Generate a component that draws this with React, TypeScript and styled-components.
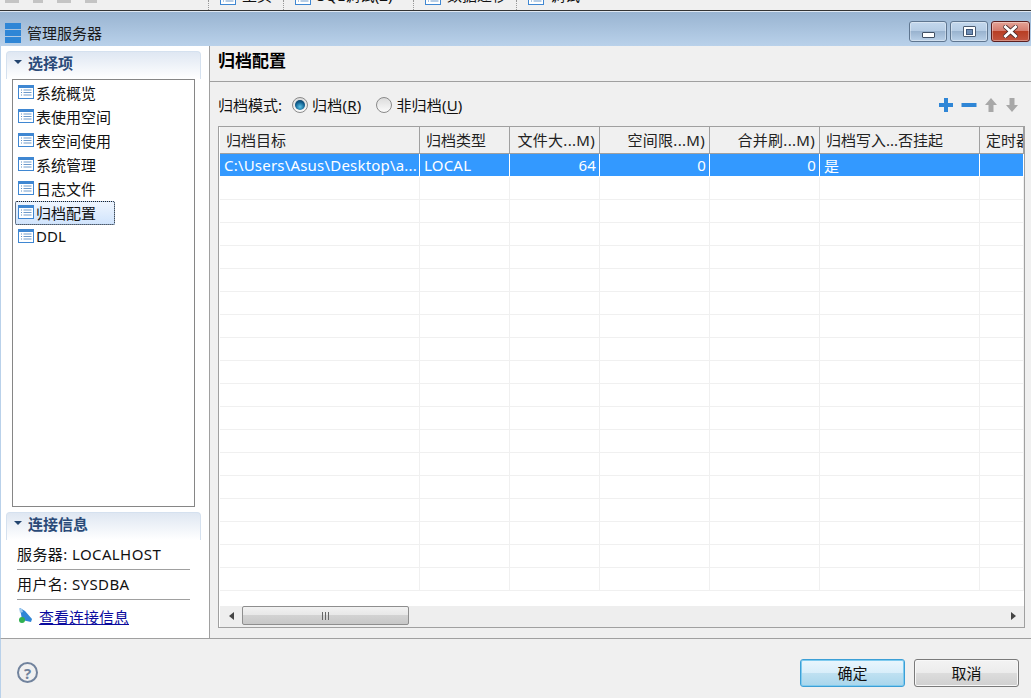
import React from 'react';
import styled, { createGlobalStyle } from 'styled-components';

const GlobalStyle = createGlobalStyle`
  html, body {
    margin: 0;
    padding: 0;
    background: #f0f0f0;
  }
  body {
    font-family: "Noto Sans", "Noto Sans CJK SC", sans-serif;
    font-size: 15px;
    color: #111;
  }
  * { box-sizing: border-box; }
`;

const Page = styled.div`
  width: 1031px;
  height: 698px;
  display: flex;
  flex-direction: column;
  overflow: hidden;
  background: #f0f0f0;
`;

const AppToolbar = styled.div`
  height: 12px;
  flex: none;
  display: flex;
  align-items: flex-start;
  overflow: hidden;
  background: #f0f0f0;
  border-bottom: 1px solid #dfe8f2;
  box-shadow: inset 0 -1px 0 #333;
`;

const ToolbarGroup = styled.div<{ $width: number }>`
  width: ${p => p.$width}px;
  flex: none;
  height: 10px;
  display: flex;
  align-items: flex-end;
  gap: 6px;
  padding: 0 0 5px 11px;
  border-left: 1px dotted #999;
  white-space: nowrap;
  font-size: 15px;
  line-height: 20px;
`;

const ToolbarStart = styled.div`
  width: 208px;
  flex: none;
  height: 10px;
  display: flex;
  align-items: flex-start;
  gap: 14px;
  padding-left: 5px;
`;

const ToolbarStub = styled.span<{ $width: number }>`
  width: ${p => p.$width}px;
  height: 3px;
  background: #c4c4c4;
`;

const TitleBar = styled.div`
  height: 34px;
  flex: none;
  display: flex;
  align-items: center;
  padding: 0 1px 0 5px;
  background: linear-gradient(#99b4d1, #b9d1ea);
`;

const TitleText = styled.div`
  margin-left: 6px;
  flex: 1;
  font-size: 15px;
  margin-top: 6px;
  color: #1a1a1a;
`;

const TitleIcon = styled.svg`
  margin-top: 8px;
  flex: none;
`;

const WindowButtons = styled.div`
  display: flex;
  gap: 3px;
  align-self: flex-start;
  margin-top: 9px;
`;

const WindowButton = styled.div<{ $close?: boolean }>`
  width: ${p => (p.$close ? 39 : 38)}px;
  height: 21px;
  border: 1px solid ${p => (p.$close ? '#5c1f1f' : '#5f7690')};
  border-radius: 3px;
  display: flex;
  align-items: center;
  justify-content: center;
  background: ${p =>
    p.$close
      ? 'linear-gradient(#e4a396 0%, #d47a6c 48%, #b83e24 50%, #c25440 100%)'
      : 'linear-gradient(#c4d8ed 0%, #b5cce4 48%, #99b3cf 50%, #b9d0e8 100%)'};
  box-shadow: inset 0 0 0 1px rgba(255, 255, 255, 0.35);
`;

const MinGlyph = styled.div`
  width: 13px;
  height: 6px;
  margin-top: 6px;
  background: #fff;
  border: 1px solid #3f4f63;
  border-radius: 1px;
`;

const MaxGlyph = styled.div`
  width: 13px;
  height: 11px;
  background: #fff;
  border: 1px solid #4a5a70;
  border-radius: 1px;
  display: flex;
  align-items: center;
  justify-content: center;
  &::after {
    content: '';
    width: 5px;
    height: 4px;
    background: #6f8db4;
    border: 1px solid #40587a;
  }
`;

const Main = styled.div`
  flex: 1;
  display: flex;
  min-height: 0;
  border-left: 1px solid #b9d1ea;
  border-bottom: 1px solid #a0a0a0;
`;

const Sidebar = styled.div`
  width: 209px;
  flex: none;
  background: #fff;
  border-right: 1px solid #a0a0a0;
  border-left: 1px solid #fff;
  padding: 5px 8px 0 4px;
  display: flex;
  flex-direction: column;
`;

const SectionHeader = styled.div`
  height: 28px;
  flex: none;
  display: flex;
  align-items: center;
  gap: 6px;
  padding: 0 0 7px 7px;
  border: 1px solid #d5e1ef;
  border-bottom: none;
  border-radius: 4px 4px 0 0;
  background: linear-gradient(#dfe7f2, #ffffff);
  color: #2a4a78;
  font-weight: 700;
  font-size: 15px;
`;

const Caret = styled.span`
  width: 0;
  height: 0;
  border-left: 4px solid transparent;
  border-right: 4px solid transparent;
  border-top: 4px solid #23456f;
`;

const ListBox = styled.div`
  flex: 1;
  margin: 0 6px;
  border: 1px solid #868686;
  padding: 1px 2px;
  display: flex;
  flex-direction: column;
  min-height: 0;
`;

const ListItem = styled.div<{ $selected?: boolean }>`
  height: 24px;
  flex: none;
  width: ${p => (p.$selected ? '100px' : 'auto')};
  display: flex;
  align-items: center;
  gap: 2px;
  padding: 0 0 2px 3px;
  font-size: 15px;
  color: #111;
  ${p =>
    p.$selected &&
    `
    outline: 1px dotted #222;
    outline-offset: -1px;
    border-radius: 2px;
    background: linear-gradient(#f0f6fe, #cfe3fc);
    box-shadow: 0 0 0 1px #a9c8ee inset;
  `}
`;

const ConnectionPanel = styled.div`
  flex: none;
  margin-top: 5px;
`;

const InfoRow = styled.div`
  height: 30px;
  margin: 0 11px;
  display: flex;
  align-items: center;
  border-bottom: 1px solid #a0a0a0;
  font-size: 15px;
  letter-spacing: 0.4px;
  padding-bottom: 3px;
`;

const LinkRow = styled.div`
  height: 38px;
  display: flex;
  align-items: center;
  gap: 5px;
  padding: 0 0 6px 12px;
`;

const InfoLink = styled.a`
  color: #0b0b9e;
  text-decoration: underline;
  font-size: 15px;
`;

const Content = styled.div`
  flex: 1;
  min-width: 0;
  display: flex;
  flex-direction: column;
  background: #f0f0f0;
`;

const ContentHeader = styled.div`
  height: 36px;
  flex: none;
  display: flex;
  align-items: center;
  padding: 0 0 8px 8px;
  border-bottom: 1px solid #a0a0a0;
  font-size: 17px;
  font-weight: 700;
  color: #000;
`;

const ModeBar = styled.div`
  height: 44px;
  flex: none;
  display: flex;
  align-items: center;
  padding: 1px 12px 0 8px;
  font-size: 15px;
`;

const ModeLabel = styled.span`
  margin-right: 10px;
`;

const RadioLabel = styled.label`
  display: flex;
  align-items: center;
  gap: 4px;
  margin-right: 15px;
  letter-spacing: 0.2px;
  u { text-underline-offset: 2px; }
`;

const RadioCircle = styled.span<{ $checked?: boolean }>`
  width: 16px;
  height: 16px;
  border-radius: 50%;
  border: 1px solid #8a8a8a;
  display: flex;
  align-items: center;
  justify-content: center;
  background: linear-gradient(#dcdcdc, #fbfbfb);
  &::after {
    content: '';
    display: ${p => (p.$checked ? 'block' : 'none')};
    width: 10px;
    height: 10px;
    border-radius: 50%;
    background: radial-gradient(circle at 50% 68%, #5cc4e8, #0f5e8e 55%, #10344f);
  }
`;

const ActionGroup = styled.div`
  margin-left: auto;
  display: flex;
  gap: 7px;
  align-items: center;
`;

const TableFrame = styled.div`
  margin: 0 6px 10px 8px;
  height: 502px;
  flex: none;
  border: 1px solid #a0a0a0;
  background: #fff;
  display: flex;
  flex-direction: column;
  overflow: hidden;
  padding-left: 1px;
`;

const gridColumns = '200px 90px 90px 110px 110px 160px 44px';

const HeaderRow = styled.div`
  height: 27px;
  flex: none;
  display: grid;
  grid-template-columns: ${gridColumns};
`;

const HeaderCell = styled.div<{ $right?: boolean }>`
  display: flex;
  align-items: center;
  justify-content: ${p => (p.$right ? 'flex-end' : 'flex-start')};
  padding: 0 4px 1px 6px;
  background: #f0f0f0;
  border-right: 1px solid #a0a0a0;
  border-bottom: 1px solid #a0a0a0;
  white-space: nowrap;
  overflow: hidden;
  font-size: 15px;
  letter-spacing: ${p => (p.$right ? '0.3px' : '0')};
  color: #222;
`;

const RowsArea = styled.div`
  flex: 1;
  min-height: 0;
  overflow: hidden;
`;

const DataRow = styled.div<{ $selected?: boolean }>`
  height: 23px;
  display: grid;
  grid-template-columns: ${gridColumns};
  background: ${p => (p.$selected ? '#3399ff' : '#fff')};
  color: ${p => (p.$selected ? '#fff' : '#111')};
  border-bottom: 1px solid ${p => (p.$selected ? '#fff' : '#f0f0f0')};
`;

const DataCell = styled.div<{ $right?: boolean; $selected?: boolean }>`
  display: flex;
  align-items: center;
  justify-content: ${p => (p.$right ? 'flex-end' : 'flex-start')};
  padding: 0 3px 0 4px;
  border-right: 1px solid ${p => (p.$selected ? '#fff' : '#f0f0f0')};
  white-space: nowrap;
  overflow: hidden;
  font-size: 15px;
  letter-spacing: 0.2px;
`;

const ScrollBar = styled.div`
  height: 21px;
  flex: none;
  display: flex;
  align-items: center;
  background: #eeeeee;
  padding-bottom: 2px;
`;

const ScrollArrow = styled.div<{ $right?: boolean }>`
  width: 22px;
  flex: none;
  display: flex;
  justify-content: center;
  &::after {
    content: '';
    border-top: 4px solid transparent;
    border-bottom: 4px solid transparent;
    ${p => (p.$right ? 'border-left: 5px solid #444;' : 'border-right: 5px solid #444;')}
  }
`;

const ScrollThumb = styled.div`
  width: 167px;
  height: 19px;
  flex: none;
  display: flex;
  align-items: center;
  justify-content: center;
  gap: 2px;
  border: 1px solid #8e8e8e;
  border-radius: 2px;
  background: linear-gradient(#f2f2f2 0%, #e8e8e8 45%, #d2d2d2 50%, #c8c8c8 100%);
`;

const ThumbGrip = styled.span`
  width: 1px;
  height: 8px;
  background: #666;
`;

const ScrollSpace = styled.div`
  flex: 1;
`;

const Footer = styled.div`
  flex: none;
  height: 59px;
  display: flex;
  align-items: center;
  padding: 9px 12px 0 16px;
  gap: 9px;
  background: #f0f0f0;
  border-left: 1px solid #b9d1ea;
`;

const HelpIcon = styled.div`
  width: 21px;
  height: 21px;
  margin-top: -1px;
  border-radius: 50%;
  border: 2px solid #71839d;
  color: #71839d;
  font-weight: 700;
  font-size: 15px;
  display: flex;
  align-items: center;
  justify-content: center;
  margin-right: auto;
`;

const DialogButton = styled.button<{ $primary?: boolean }>`
  width: 105px;
  height: 28px;
  font: inherit;
  font-size: 15px;
  color: #111;
  padding: 0 0 2px;
  border-radius: 3px;
  border: 1px solid ${p => (p.$primary ? '#3c9fd6' : '#7a7a7a')};
  background: ${p =>
    p.$primary
      ? 'linear-gradient(#eaf6fd 0%, #d9eefa 48%, #bee0f1 52%, #a9d6ec 100%)'
      : 'linear-gradient(#f3f3f3 0%, #ececec 48%, #dcdcdc 52%, #d0d0d0 100%)'};
  box-shadow: ${p =>
    p.$primary ? 'inset 0 0 0 1px #7fcbef' : 'inset 0 0 0 1px #f8f8f8'};
`;

const TableIcon = () => (
  <svg width="16" height="14" viewBox="0 0 16 14">
    <rect x="0.5" y="0.5" width="15" height="13" fill="#fff" stroke="#3f87d2" />
    <rect x="0" y="0" width="16" height="3" fill="#3f87d2" />
    <path d="M3 5h1M3 7.5h1M3 10h1" stroke="#5a8fc6" />
    <path d="M5.5 5h8M5.5 7.5h8M5.5 10h8" stroke="#6f9bcb" />
  </svg>
);

const PlusIcon = () => (
  <svg width="16" height="16" viewBox="0 0 16 16">
    <path d="M6 1h4v5h5v4h-5v5H6v-5H1V6h5z" fill="#2f86d6" />
  </svg>
);

const MinusIcon = () => (
  <svg width="16" height="16" viewBox="0 0 16 16">
    <rect x="0.5" y="6" width="15" height="4" fill="#2f86d6" />
  </svg>
);

const ArrowIcon = ({ down }: { down?: boolean }) => (
  <svg width="14" height="16" viewBox="0 0 14 16">
    <path
      d={down ? 'M4.5 1h5v7H13l-6 7-6-7h3.5z' : 'M7 1l6 7H9.5v7h-5V8H1z'}
      fill="#a8a8a8"
    />
  </svg>
);

const LinkIcon = () => (
  <svg width="16" height="18" viewBox="0 0 16 18">
    <path d="M2 1l5 3 7 8-1 3-9-2-1-6z" fill="#2f86d6" />
    <path d="M1 1l3 1 1 3-3 1z" fill="#9ec8ee" />
    <circle cx="4" cy="13" r="3" fill="#30b050" />
  </svg>
);

const menuItems = ['系统概览', '表使用空间', '表空间使用', '系统管理', '日志文件', '归档配置', 'DDL'];

const columns = [
  { title: '归档目标', right: false, value: 'C:\\Users\\Asus\\Desktop\\a...' },
  { title: '归档类型', right: false, value: 'LOCAL' },
  { title: '文件大...M)', right: true, value: '64' },
  { title: '空间限...M)', right: true, value: '0' },
  { title: '合并刷...M)', right: true, value: '0' },
  { title: '归档写入...否挂起', right: false, value: '是' },
  { title: '定时器', right: false, value: '' },
];

const App: React.FC = () => {
  return (
    <Page>
      <GlobalStyle />
      <AppToolbar>
        <ToolbarStart>
          <ToolbarStub $width={14} />
          <ToolbarStub $width={10} />
          <ToolbarStub $width={14} />
          <ToolbarStub $width={12} />
        </ToolbarStart>
        <ToolbarGroup $width={75}>
          <TableIcon />
          主页
        </ToolbarGroup>
        <ToolbarGroup $width={130}>
          <TableIcon />
          SQL调试(Z)
        </ToolbarGroup>
        <ToolbarGroup $width={103}>
          <TableIcon />
          数据迁移
        </ToolbarGroup>
        <ToolbarGroup $width={100}>
          <TableIcon />
          调试
        </ToolbarGroup>
      </AppToolbar>

      <TitleBar>
        <TitleIcon width="16" height="20" viewBox="0 0 16 20">
          <rect y="0" width="16" height="6" fill="#2f86d6" />
          <rect y="7" width="16" height="6" fill="#2f86d6" />
          <rect y="14" width="16" height="6" fill="#2f86d6" />
        </TitleIcon>
        <TitleText>管理服务器</TitleText>
        <WindowButtons>
          <WindowButton>
            <MinGlyph />
          </WindowButton>
          <WindowButton>
            <MaxGlyph />
          </WindowButton>
          <WindowButton $close>
            <svg width="15" height="13" viewBox="0 0 15 13">
              <path
                d="M2.5 2l10 9M12.5 2l-10 9"
                stroke="#4a2a2a"
                strokeWidth="4.5"
                strokeLinecap="square"
              />
              <path d="M2.5 2l10 9M12.5 2l-10 9" stroke="#fff" strokeWidth="3" strokeLinecap="square" />
            </svg>
          </WindowButton>
        </WindowButtons>
      </TitleBar>

      <Main>
        <Sidebar>
          <SectionHeader>
            <Caret />
            选择项
          </SectionHeader>
          <ListBox>
            {menuItems.map(item => (
              <ListItem key={item} $selected={item === '归档配置'}>
                <TableIcon />
                {item}
              </ListItem>
            ))}
          </ListBox>
          <ConnectionPanel>
            <SectionHeader>
              <Caret />
              连接信息
            </SectionHeader>
            <InfoRow>服务器: LOCALHOST</InfoRow>
            <InfoRow>用户名: SYSDBA</InfoRow>
            <LinkRow>
              <LinkIcon />
              <InfoLink>查看连接信息</InfoLink>
            </LinkRow>
          </ConnectionPanel>
        </Sidebar>

        <Content>
          <ContentHeader>归档配置</ContentHeader>
          <ModeBar>
            <ModeLabel>归档模式:</ModeLabel>
            <RadioLabel>
              <RadioCircle $checked />
              <span>
                归档(<u>R</u>)
              </span>
            </RadioLabel>
            <RadioLabel>
              <RadioCircle />
              <span>
                非归档(<u>U</u>)
              </span>
            </RadioLabel>
            <ActionGroup>
              <PlusIcon />
              <MinusIcon />
              <ArrowIcon />
              <ArrowIcon down />
            </ActionGroup>
          </ModeBar>
          <TableFrame>
            <HeaderRow>
              {columns.map(col => (
                <HeaderCell key={col.title} $right={col.right}>
                  {col.title}
                </HeaderCell>
              ))}
            </HeaderRow>
            <RowsArea>
              <DataRow $selected>
                {columns.map(col => (
                  <DataCell key={col.title} $right={col.right} $selected>
                    {col.value}
                  </DataCell>
                ))}
              </DataRow>
              {Array.from({ length: 18 }, (_, i) => (
                <DataRow key={i}>
                  {columns.map(col => (
                    <DataCell key={col.title} />
                  ))}
                </DataRow>
              ))}
            </RowsArea>
            <ScrollBar>
              <ScrollArrow />
              <ScrollThumb>
                <ThumbGrip />
                <ThumbGrip />
                <ThumbGrip />
              </ScrollThumb>
              <ScrollSpace />
              <ScrollArrow $right />
            </ScrollBar>
          </TableFrame>
        </Content>
      </Main>

      <Footer>
        <HelpIcon>?</HelpIcon>
        <DialogButton $primary>确定</DialogButton>
        <DialogButton>取消</DialogButton>
      </Footer>
    </Page>
  );
};

export default App;
